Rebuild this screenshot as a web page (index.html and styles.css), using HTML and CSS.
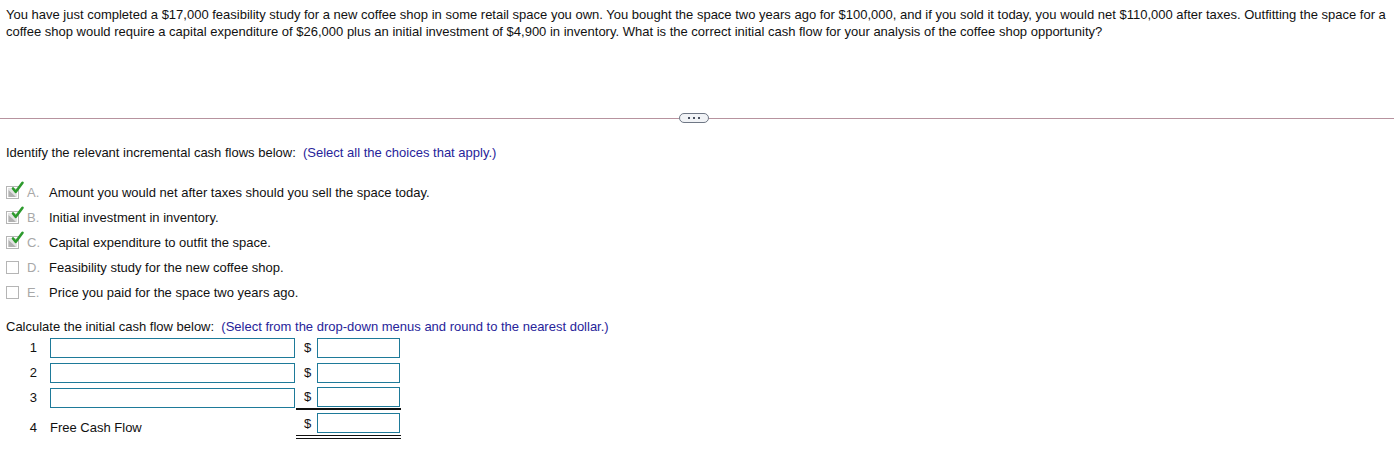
FILE: index.html
```html
<!DOCTYPE html>
<html>
<head>
<meta charset="utf-8">
<link rel="stylesheet" href="styles.css">
</head>
<body>
<div class="question">You have just completed a $17,000 feasibility study for a new coffee shop in some retail space you own. You bought the space two years ago for $100,000, and if you sold it today, you would net $110,000 after taxes. Outfitting the space for a coffee shop would require a capital expenditure of $26,000 plus an initial investment of $4,900 in inventory. What is the correct initial cash flow for your analysis of the coffee shop opportunity?</div>

<div class="divider">
  <span class="rule"></span>
  <span class="more"><i></i><i></i><i></i></span>
  <span class="rule"></span>
</div>

<div class="prompt">Identify the relevant incremental cash flows below:&nbsp; <span class="hint">(Select all the choices that apply.)</span></div>

<ul class="choices">
  <li class="choice checked"><span class="box"><svg width="24" height="18" viewBox="0 0 24 18"><rect x="1.5" y="4.5" width="12" height="12" fill="#fff" stroke="#b5b5b5"/><path d="M3.5 15 L3.5 8 L11 15 Z" fill="#9a9a9a"/><rect x="3" y="6" width="9" height="9" fill="#c8c8c8" opacity="0.5"/><path d="M8 6.5 L10.8 9.8 L17.5 0.8" fill="none" stroke="#2d9a2d" stroke-width="2.6" stroke-linecap="round" stroke-linejoin="round"/></svg></span><span class="letter">A.</span><span class="text">Amount you would net after taxes should you sell the space today.</span></li>
  <li class="choice checked"><span class="box"><svg width="24" height="18" viewBox="0 0 24 18"><rect x="1.5" y="4.5" width="12" height="12" fill="#fff" stroke="#b5b5b5"/><path d="M3.5 15 L3.5 8 L11 15 Z" fill="#9a9a9a"/><rect x="3" y="6" width="9" height="9" fill="#c8c8c8" opacity="0.5"/><path d="M8 6.5 L10.8 9.8 L17.5 0.8" fill="none" stroke="#2d9a2d" stroke-width="2.6" stroke-linecap="round" stroke-linejoin="round"/></svg></span><span class="letter">B.</span><span class="text">Initial investment in inventory.</span></li>
  <li class="choice checked"><span class="box"><svg width="24" height="18" viewBox="0 0 24 18"><rect x="1.5" y="4.5" width="12" height="12" fill="#fff" stroke="#b5b5b5"/><path d="M3.5 15 L3.5 8 L11 15 Z" fill="#9a9a9a"/><rect x="3" y="6" width="9" height="9" fill="#c8c8c8" opacity="0.5"/><path d="M8 6.5 L10.8 9.8 L17.5 0.8" fill="none" stroke="#2d9a2d" stroke-width="2.6" stroke-linecap="round" stroke-linejoin="round"/></svg></span><span class="letter">C.</span><span class="text">Capital expenditure to outfit the space.</span></li>
  <li class="choice"><span class="box"><svg width="24" height="18" viewBox="0 0 24 18"><rect x="1.5" y="4.5" width="12" height="12" fill="#fff" stroke="#b5b5b5"/></svg></span><span class="letter">D.</span><span class="text">Feasibility study for the new coffee shop.</span></li>
  <li class="choice"><span class="box"><svg width="24" height="18" viewBox="0 0 24 18"><rect x="1.5" y="4.5" width="12" height="12" fill="#fff" stroke="#b5b5b5"/></svg></span><span class="letter">E.</span><span class="text">Price you paid for the space two years ago.</span></li>
</ul>

<div class="prompt calc-prompt">Calculate the initial cash flow below:&nbsp; <span class="hint">(Select from the drop-down menus and round to the nearest dollar.)</span></div>

<div class="calc">
  <div class="row">
    <span class="num">1</span>
    <span class="wide field"></span>
    <span class="cur">$</span>
    <span class="amt"><span class="small field"></span></span>
  </div>
  <div class="row">
    <span class="num">2</span>
    <span class="wide field"></span>
    <span class="cur">$</span>
    <span class="amt"><span class="small field"></span></span>
  </div>
  <div class="row sub">
    <span class="num">3</span>
    <span class="wide field"></span>
    <span class="cur">$</span>
    <span class="amt"><span class="small field"></span></span>
  </div>
  <div class="row total">
    <span class="num">4</span>
    <span class="label">Free Cash Flow</span>
    <span class="cur">$</span>
    <span class="amt"><span class="small field"></span></span>
  </div>
</div>
</body>
</html>
```

FILE: styles.css
```css
html, body {
  margin: 0;
  padding: 0;
  background: #fff;
}
body {
  font-family: "Liberation Sans", Arial, sans-serif;
  font-size: 13px;
  color: #111;
}
.question {
  padding: 6px 3px 0 6px;
  line-height: 17px;
  font-size: 13px;
}
.divider {
  display: flex;
  align-items: center;
  margin-top: 73px;
  height: 10px;
}
.rule {
  flex: 1;
  height: 1px;
  background: #b7939f;
}
.rule:first-child {
  flex: 0 0 679px;
}
.more {
  width: 28px;
  height: 8px;
  border: 1px solid #6f7785;
  border-radius: 5px;
  background: #f1f3f6;
  display: flex;
  align-items: center;
  justify-content: center;
  gap: 3px;
}
.more i {
  width: 2px;
  height: 2px;
  background: #4a5160;
  display: block;
}
.prompt {
  padding-left: 6px;
  margin-top: 21px;
  line-height: 17px;
}
.hint {
  color: #27249a;
}
.choices {
  list-style: none;
  margin: 19px 0 0 0;
  padding: 0 0 0 5px;
}
.choice {
  display: flex;
  align-items: center;
  height: 25px;
}
.box {
  width: 22px;
  height: 18px;
  margin-top: -4px;
}
.box svg {
  display: block;
  overflow: visible;
}
.letter {
  color: #a8a8a8;
  width: 22px;
}
.calc-prompt {
  margin-top: 13px;
}
.calc {
  display: flex;
  flex-direction: column;
  margin-top: 0;
}
.row {
  display: grid;
  grid-template-columns: 50px 246px 21px 84px;
  align-items: center;
  height: 25px;
}
.num {
  text-align: right;
  padding-right: 13px;
}
.field {
  display: block;
  height: 18px;
  border: 1px solid #1e7a99;
  background: #fff;
}
.wide {
  width: 243px;
}
.cur {
  text-align: center;
  padding-left: 2px;
}
.amt {
  display: block;
}
.small {
  width: 81px;
}
.sub .amt,
.sub .cur {
  align-self: stretch;
  display: flex;
  align-items: center;
  justify-content: center;
  border-bottom: 2px solid #111;
}
.sub .amt {
  justify-content: flex-start;
}
.sub .amt .small {
  flex: 0 0 81px;
}
.total {
  height: 29px;
  align-items: stretch;
}
.total .cur,
.total .amt {
  display: flex;
  align-items: center;
  justify-content: center;
  padding: 3px 0 2px 0;
  border-bottom: 4px double #111;
}
.total .cur {
  padding-left: 2px;
}
.total .amt {
  justify-content: flex-start;
}
.total .label,
.total .num {
  padding-top: 10px;
  line-height: 15px;
}
```
